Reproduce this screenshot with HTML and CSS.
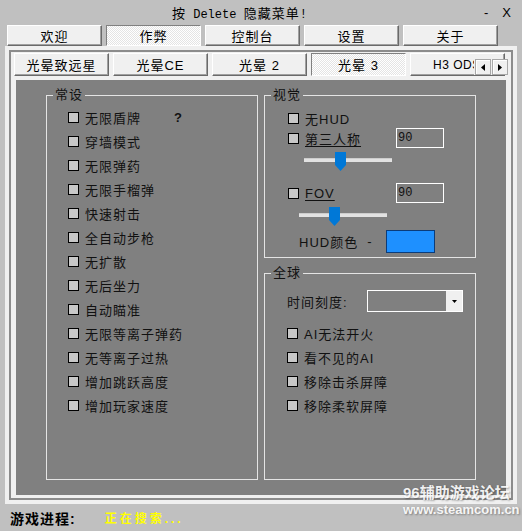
FILE: index.html
```html
<!DOCTYPE html>
<html lang="zh-CN">
<head>
    <meta charset="UTF-8">
    <meta name="viewport" content="width=device-width, initial-scale=1.0">
    <title>按 Delete 隐藏菜单!</title>
    <link rel="stylesheet" href="styles.css">
</head>
<body>
<div class="window">
    <header class="titlebar">
        <span class="title"><span class="zh">按</span> Delete <span class="zh">隐藏菜单</span>!</span>
        <span class="ctrl min">-</span>
        <span class="ctrl close">X</span>
    </header>

    <!-- main tabs -->
    <nav class="tabs">
        <div class="tab">欢迎</div>
        <div class="tab active">作弊</div>
        <div class="tab">控制台</div>
        <div class="tab">设置</div>
        <div class="tab">关于</div>
    </nav>

    <div class="frame">
        <div class="inner">
            <!-- game tabs -->
            <div class="subtabs">
                <div class="tab">光晕致远星</div>
                <div class="tab">光晕CE</div>
                <div class="tab">光晕 2</div>
                <div class="tab active">光晕 3</div>
                <div class="tab latin">H3 ODS</div>
                <div class="scroll">
                    <span class="arrow"><svg width="4" height="7" viewBox="0 0 4 7"><polygon points="4,0 4,7 0,3.5" fill="#000"/></svg></span>
                    <span class="arrow"><svg width="4" height="7" viewBox="0 0 4 7"><polygon points="0,0 0,7 4,3.5" fill="#000"/></svg></span>
                </div>
            </div>

            <div class="page">
                <div class="group general">
                    <div class="legend">常设</div>
                    <ul class="checks">
                        <li><i class="box"></i>无限盾牌<span class="help">?</span></li>
                        <li><i class="box"></i>穿墙模式</li>
                        <li><i class="box"></i>无限弹药</li>
                        <li><i class="box"></i>无限手榴弹</li>
                        <li><i class="box"></i>快速射击</li>
                        <li><i class="box"></i>全自动步枪</li>
                        <li><i class="box"></i>无扩散</li>
                        <li><i class="box"></i>无后坐力</li>
                        <li><i class="box"></i>自动瞄准</li>
                        <li><i class="box"></i>无限等离子弹药</li>
                        <li><i class="box"></i>无等离子过热</li>
                        <li><i class="box"></i>增加跳跃高度</li>
                        <li><i class="box"></i>增加玩家速度</li>
                    </ul>
                </div>

                <div class="col">
                    <div class="group visual">
                        <div class="legend">视觉</div>
                        <div class="row first"><i class="box"></i><span>无HUD</span></div>
                        <div class="row"><i class="box"></i><span class="link">第三人称</span><span class="num">90</span></div>
                        <div class="slider cam">
                            <div class="track"></div>
                            <svg class="thumb" style="left: 31px" width="11" height="19" viewBox="0 0 11 19"><polygon points="0,0 11,0 11,13 5.5,19 0,13" fill="#0078d7"/></svg>
                        </div>
                        <div class="row fov"><i class="box"></i><span class="link">FOV</span><span class="num">90</span></div>
                        <div class="slider fov-slider">
                            <div class="track"></div>
                            <svg class="thumb" style="left: 30px" width="11" height="19" viewBox="0 0 11 19"><polygon points="0,0 11,0 11,13 5.5,19 0,13" fill="#0078d7"/></svg>
                        </div>
                        <div class="hud-color">
                            <span>HUD颜色</span><span class="dash">-</span>
                            <span class="swatch"></span>
                        </div>
                    </div>

                    <div class="group world">
                        <div class="legend">全球</div>
                        <div class="combo-row">
                            <span>时间刻度:</span>
                            <div class="combo">
                                <span class="combo-btn"><svg width="5" height="3" viewBox="0 0 5 3"><polygon points="0,0 5,0 2.5,3" fill="#000"/></svg></span>
                            </div>
                        </div>
                        <ul class="checks">
                            <li><i class="box"></i>AI无法开火</li>
                            <li><i class="box"></i>看不见的AI</li>
                            <li><i class="box"></i>移除击杀屏障</li>
                            <li><i class="box"></i>移除柔软屏障</li>
                        </ul>
                    </div>
                </div>
            </div>
        </div>
    </div>

    <footer class="status">
        <span class="status-label">游戏进程:</span>
        <span class="status-value">正在搜索...</span>
    </footer>

    <div class="watermark">
        <div class="wm-name">96辅助游戏论坛</div>
        <div class="wm-url">www.steamcom.cn</div>
    </div>
</div>
</body>
</html>
```

FILE: styles.css
```css
/* General styling */
body {
    margin: 0;
    background-color: #c0c0c0;
    font-family: "Liberation Sans", "Noto Sans CJK SC", sans-serif;
    font-size: 13px;
    color: #000;
}

.window {
    position: relative;
    width: 522px;
    height: 531px;
    overflow: hidden;
}

/* Title bar */
.titlebar {
    display: flex;
    align-items: center;
    height: 25px;
}

.title {
    margin-left: 172px;
    font-family: "Liberation Mono", "Noto Sans CJK SC", monospace;
    font-size: 12px;
    white-space: pre;
}

.title .zh {
    font-family: "Noto Sans CJK SC", sans-serif;
    font-size: 13px;
    letter-spacing: 1px;
}

.ctrl.min {
    margin-left: auto;
    margin-right: 14px;
}

.ctrl.close {
    margin-right: 11px;
}

/* Tabs */
.tabs {
    display: flex;
    gap: 4px;
    padding-left: 7px;
    height: 21px;
}

.tab {
    box-sizing: border-box;
    width: 95px;
    flex-shrink: 0;
    display: flex;
    align-items: center;
    justify-content: center;
    background-color: #f0f0f0;
    border: 1px solid;
    border-color: #fff #6a6a6a #6a6a6a #fff;
    box-shadow: inset -1px -1px #a0a0a0;
    letter-spacing: 1px;
    white-space: nowrap;
}

.tab.latin {
    justify-content: flex-start;
    padding-left: 22px;
    font-size: 12px;
    letter-spacing: 0.5px;
}

.tab.active {
    border-color: #808080 #fff #fff #808080;
    box-shadow: none;
    background-color: #fff;
    background-image: conic-gradient(#e4e4e4 25%, #fff 0 50%, #e4e4e4 0 75%, #fff 0);
    background-size: 2px 2px;
}

/* Frames */
.frame {
    margin-left: 5px;
    width: 512px;
    box-sizing: border-box;
    background-color: #f0f0f0;
    padding: 4px;
}

.inner {
    border: 2px solid #8c8c8c;
    padding: 1px 3px 3px;
}

.subtabs {
    position: relative;
    display: flex;
    gap: 4px;
    height: 23px;
    overflow: hidden;
}

.scroll {
    position: absolute;
    right: 0;
    top: 6px;
    display: flex;
    gap: 1px;
    padding-left: 1px;
    background-color: #f0f0f0;
}

.arrow {
    box-sizing: border-box;
    width: 16px;
    height: 16px;
    display: flex;
    align-items: center;
    justify-content: center;
    background-color: #f0f0f0;
    border: 1px solid #a8a8a8;
    box-shadow: inset 1px 1px #fff;
}

.page {
    margin: 4px 2px 0;
    height: 415px;
    box-sizing: border-box;
    background-color: #808080;
    padding: 15px 30px;
    display: flex;
    gap: 6px;
    color: #111;
    letter-spacing: 1px;
}

/* Group boxes */
.group {
    box-sizing: border-box;
    width: 212px;
    border: 1px solid #e4e4e4;
}

.general {
    height: 385px;
}

.col {
    display: flex;
    flex-direction: column;
    gap: 15px;
}

.visual {
    height: 163px;
}

.world {
    height: 207px;
}

.legend {
    width: fit-content;
    margin: -8px 0 0 6px;
    padding: 0 2px;
    background-color: #808080;
    line-height: 14px;
}

.checks {
    list-style: none;
    margin: 0;
    padding: 3px 0 0 21px;
}

.checks li {
    display: flex;
    align-items: center;
    gap: 6px;
    height: 24px;
}

.world .checks {
    padding: 9px 0 0 22px;
}

.box {
    width: 11px;
    height: 11px;
    box-sizing: border-box;
    border: 1px solid #000;
    background-color: #c8c8c8;
    flex-shrink: 0;
}

.help {
    margin-left: 27px;
    font-weight: bold;
}

/* Visual group */
.row {
    display: flex;
    align-items: center;
    gap: 6px;
    height: 20px;
    padding-left: 23px;
}

.row.first {
    margin-top: 6px;
}

.row.fov {
    margin-top: 11px;
}

.link {
    text-decoration: underline;
    text-underline-offset: 2px;
}

.num {
    margin-left: auto;
    margin-right: 31px;
    width: 48px;
    height: 20px;
    box-sizing: border-box;
    border: 1px solid #fff;
    padding-left: 1px;
    display: flex;
    align-items: center;
    font-family: "Liberation Mono", monospace;
    font-size: 12px;
    letter-spacing: 0;
}

.slider {
    position: relative;
    width: 88px;
    height: 24px;
    box-sizing: border-box;
    padding-top: 10px;
}

.slider.cam {
    margin-left: 39px;
}

.slider.fov-slider {
    margin-left: 34px;
}

.track {
    height: 4px;
    background-color: #e2e2e2;
    box-shadow: inset 0 1px #cdcdcd;
}

.thumb {
    position: absolute;
    top: 4px;
}

.hud-color {
    display: flex;
    align-items: center;
    margin-top: 3px;
    height: 23px;
    padding-left: 34px;
}

.dash {
    margin-left: 9px;
}

.swatch {
    margin-left: auto;
    margin-right: 40px;
    width: 49px;
    height: 23px;
    box-sizing: border-box;
    background-color: #1e90ff;
    border: 1px solid #0b3c7a;
}

/* World group */
.combo-row {
    display: flex;
    align-items: center;
    margin-top: 10px;
    height: 22px;
    padding-left: 22px;
}

.combo {
    margin-left: auto;
    margin-right: 12px;
    width: 96px;
    height: 22px;
    box-sizing: border-box;
    border: 1px solid #fff;
    display: flex;
    justify-content: flex-end;
}

.combo-btn {
    width: 16px;
    display: flex;
    align-items: center;
    justify-content: center;
    background-color: #f0f0f0;
}

/* Status line */
.status {
    display: flex;
    align-items: center;
    height: 27px;
    padding-left: 10px;
}

.status-label {
    font-size: 14px;
    font-weight: bold;
    letter-spacing: 1px;
}

.status-value {
    margin-left: 29px;
    color: #ffff00;
    font-size: 12px;
    font-weight: bold;
    letter-spacing: 3px;
}

.watermark {
    position: absolute;
    left: 403px;
    top: 484px;
    color: rgba(255, 255, 255, 0.92);
    font-weight: bold;
    text-shadow: 1px 1px 2px rgba(0, 0, 0, 0.35);
}

.wm-name {
    font-size: 15px;
    line-height: 18px;
}

.wm-url {
    font-size: 13px;
    line-height: 16px;
}
```
